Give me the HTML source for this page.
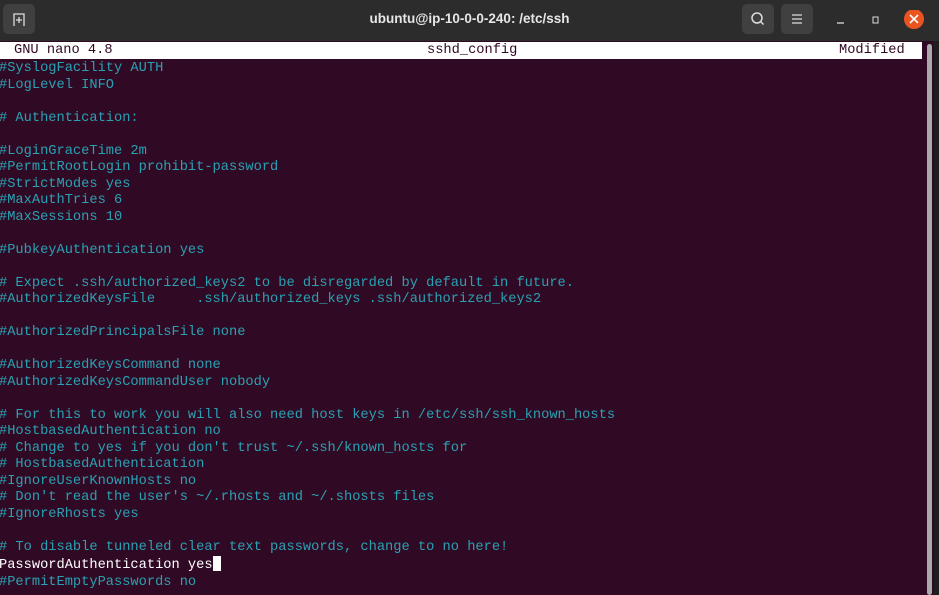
<!DOCTYPE html>
<html style="width:939px;height:595px;overflow:hidden"><head><meta charset="utf-8"><style>
*{margin:0;padding:0;box-sizing:border-box}
body{width:939px;height:595px;overflow:hidden;background:#300a24;position:relative;font-family:"Liberation Mono",monospace}
.tb{position:absolute;left:0;top:0;width:939px;height:41px;background:#2c2c2c}
.title{position:absolute;left:0;width:939px;top:11px;text-align:center;color:#e6e6e6;font:bold 13.5px "Liberation Sans",sans-serif}
.btn{position:absolute;top:4px;width:32px;height:30px;background:#404040;border-radius:5px}
.hdr{position:absolute;left:0;top:42px;width:922px;height:17px;background:#fff;color:#300a24;font-size:13.7px;line-height:17px;white-space:pre}
.hdr span{position:absolute;top:0}
.txt{position:absolute;left:-1px;top:61px;font-size:13.7px;line-height:16.5px;white-space:pre;color:#2aa1b3}
.w{color:#fff}
.cur{display:inline-block;width:8px;height:15px;background:#fff;vertical-align:-3px}
.sb{position:absolute;left:927px;top:44px;width:5px;height:551px;background:#aaa;border-radius:3px}
.edge{position:absolute;left:934px;top:41px;width:5px;height:554px;background:#1e1e1e}
</style></head><body>
<div class="tb">
<div class="btn" style="left:3px"><svg width="32" height="30"><path d="M11 22V10h10v12" fill="none" stroke="#ddd" stroke-width="1.3"/><path d="M16 13v6M13 16h6" stroke="#ddd" stroke-width="1.3"/></svg></div>
<div class="title">ubuntu@ip-10-0-0-240: /etc/ssh</div>
<div class="btn" style="left:742px"><svg width="32" height="30"><circle cx="15" cy="14" r="5" fill="none" stroke="#ddd" stroke-width="1.5"/><path d="M18.5 17.5l3 3" stroke="#ddd" stroke-width="1.5"/></svg></div>
<div class="btn" style="left:781px"><svg width="32" height="30"><path d="M11 11h10M11 15h10M11 19h10" stroke="#ddd" stroke-width="1.3"/></svg></div>
<svg style="position:absolute;left:830px;top:10px" width="110" height="22"><path d="M7 13h7" stroke="#ddd" stroke-width="1.3"/><rect x="43" y="7" width="5" height="6" fill="none" stroke="#ddd"/><circle cx="84" cy="9" r="10" fill="#e95420"/><path d="M80 5l8 8M88 5l-8 8" stroke="#fff" stroke-width="1.6"/></svg>
</div>
<div class="hdr"><span style="left:14px">GNU nano 4.8</span><span style="left:427px">sshd_config</span><span style="left:839px">Modified</span></div>
<div class="txt">#SyslogFacility AUTH
#LogLevel INFO

# Authentication:

#LoginGraceTime 2m
#PermitRootLogin prohibit-password
#StrictModes yes
#MaxAuthTries 6
#MaxSessions 10

#PubkeyAuthentication yes

# Expect .ssh/authorized_keys2 to be disregarded by default in future.
#AuthorizedKeysFile     .ssh/authorized_keys .ssh/authorized_keys2

#AuthorizedPrincipalsFile none

#AuthorizedKeysCommand none
#AuthorizedKeysCommandUser nobody

# For this to work you will also need host keys in /etc/ssh/ssh_known_hosts
#HostbasedAuthentication no
# Change to yes if you don't trust ~/.ssh/known_hosts for
# HostbasedAuthentication
#IgnoreUserKnownHosts no
# Don't read the user's ~/.rhosts and ~/.shosts files
#IgnoreRhosts yes

# To disable tunneled clear text passwords, change to no here!
<span class="w">PasswordAuthentication yes</span><span class="cur"></span>
#PermitEmptyPasswords no</div>
<div class="edge"></div>
<div class="sb"></div>
</body></html>
